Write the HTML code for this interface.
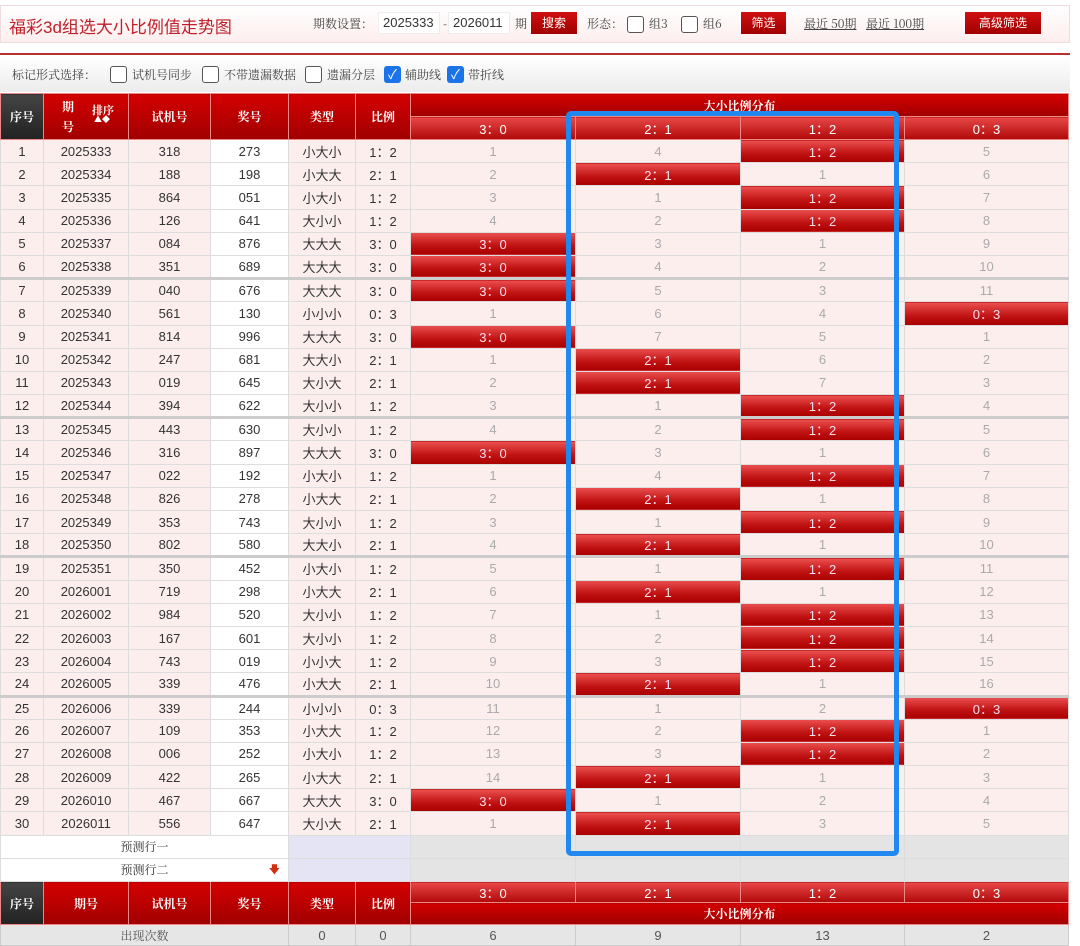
<!DOCTYPE html>
<html><head><meta charset="utf-8">
<style>
*{margin:0;padding:0;box-sizing:border-box}
body{width:1080px;height:946px;overflow:hidden;background:#fff;font-family:"Liberation Sans","Noto Sans CJK SC",sans-serif;font-size:13px;color:#333;position:relative}
.top{position:absolute;left:0;top:5px;width:1070px;height:38px;border:1px solid #f0dcdc;background:linear-gradient(#fff,#fdeeee)}
.title{position:absolute;left:8px;top:7px;font-family:"Liberation Sans","Noto Sans CJK SC",sans-serif;font-size:17px;color:#c0202a}
.ctl{position:absolute;top:9px;font-family:"Noto Serif CJK SC",serif;font-size:12px;color:#444}
.inp{position:absolute;top:6px;height:22px;background:#fff;border:1px solid #eee;font-size:13px;line-height:20px;padding-left:4px;color:#333}
.btn{position:absolute;top:6px;height:22px;background:linear-gradient(#d01010,#a00000);color:#fff;font-size:12px;line-height:22px;text-align:center}
.cb{position:absolute;width:17px;height:17px;border:1px solid #555;border-radius:3px;background:#fff}
.cbc{position:absolute;width:17px;height:17px;border-radius:3px;background:#1a73e8;color:#fff;font-size:13px;line-height:17px;text-align:center}
.redline{position:absolute;left:0;top:53px;width:1070px;height:2px;background:#b83030}
.mark{position:absolute;left:0;top:56px;width:1070px;height:36px;background:linear-gradient(#fff,#ececec)}
.mark span{position:absolute;top:10px;font-family:"Noto Serif CJK SC",serif;font-size:12px;color:#444}
table{position:absolute;left:0;top:93px;border-collapse:collapse;table-layout:fixed;width:1068px}
td{border:1px solid #ddd;text-align:center;height:23.2px;padding:0;font-size:13px;white-space:nowrap;overflow:hidden}
tbody td{background:#fdeeee;color:#333}
tbody td.w{background:#fff}
tbody td.n{color:#aaa}
tbody td.r{background:linear-gradient(#ec5050,#c01212 60%,#a80000);color:#fde;border-color:#ddd}
tr.s td{border-top:3px solid #ccc}
th,.h{background:linear-gradient(#d40000,#a00000);color:#fff;font-family:"Noto Serif CJK SC",serif;font-size:12px;font-weight:bold;border:1px solid #e88;text-align:center;padding:0}
.dk{background:linear-gradient(#444,#222)!important}
.sub{background:linear-gradient(#e84848,#b00808)!important;font-family:"Liberation Sans",sans-serif;font-weight:normal;font-size:13px;height:22px}
.g td{background:#e6e6e6;border-color:#ccc;height:21px}
.blue{position:absolute;left:566px;top:111px;width:333px;height:745px;border:5px solid #2188f0;border-radius:5px}
</style></head><body>
<div class="top">
<div class="title">福彩3d组选大小比例值走势图</div>
<span class="ctl" style="left:312px">期数设置：</span>
<div class="inp" style="left:377px;width:62px">2025333</div>
<span class="ctl" style="left:442px">-</span>
<div class="inp" style="left:447px;width:62px">2026011</div>
<span class="ctl" style="left:514px">期</span>
<div class="btn" style="left:530px;width:46px">搜索</div>
<span class="ctl" style="left:586px">形态：</span>
<div class="cb" style="left:626px;top:10px"></div><span class="ctl" style="left:648px">组3</span>
<div class="cb" style="left:680px;top:10px"></div><span class="ctl" style="left:702px">组6</span>
<div class="btn" style="left:740px;width:45px">筛选</div>
<span class="ctl" style="left:803px;text-decoration:underline">最近 50期</span>
<span class="ctl" style="left:865px;text-decoration:underline">最近 100期</span>
<div class="btn" style="left:964px;width:76px">高级筛选</div>
</div>
<div class="redline"></div>
<div class="mark">
<span style="left:12px">标记形式选择：</span>
<div class="cb" style="left:110px;top:10px"></div><span style="left:132px">试机号同步</span>
<div class="cb" style="left:202px;top:10px"></div><span style="left:224px">不带遗漏数据</span>
<div class="cb" style="left:305px;top:10px"></div><span style="left:327px">遗漏分层</span>
<div class="cbc" style="left:384px;top:10px">✓</div><span style="left:405px">辅助线</span>
<div class="cbc" style="left:447px;top:10px">✓</div><span style="left:468px">带折线</span>
</div>
<table>
<colgroup><col style="width:43px"><col style="width:85px"><col style="width:82px"><col style="width:78px"><col style="width:67px"><col style="width:55px"><col style="width:165px"><col style="width:165px"><col style="width:164px"><col style="width:164px"></colgroup>
<thead>
<tr style="height:23px"><th rowspan="2" class="dk">序号</th><th rowspan="2" style="position:relative"><span style="position:absolute;left:18px;top:4px">期</span><span style="position:absolute;left:18px;top:24px">号</span><span style="position:absolute;left:48px;top:8px;font-size:11px">排序</span><span style="position:absolute;left:50px;top:20px;font-size:8px">▲◆</span></th><th rowspan="2">试机号</th><th rowspan="2">奖号</th><th rowspan="2">类型</th><th rowspan="2">比例</th><th colspan="4">大小比例分布</th></tr>
<tr style="height:23px"><th class="sub">3：0</th><th class="sub">2：1</th><th class="sub">1：2</th><th class="sub">0：3</th></tr>
</thead>
<tbody>
<tr><td>1</td><td>2025333</td><td>318</td><td class="w">273</td><td>小大小</td><td>1：2</td><td class="n">1</td><td class="n">4</td><td class="r">1：2</td><td class="n">5</td></tr>
<tr><td>2</td><td>2025334</td><td>188</td><td class="w">198</td><td>小大大</td><td>2：1</td><td class="n">2</td><td class="r">2：1</td><td class="n">1</td><td class="n">6</td></tr>
<tr><td>3</td><td>2025335</td><td>864</td><td class="w">051</td><td>小大小</td><td>1：2</td><td class="n">3</td><td class="n">1</td><td class="r">1：2</td><td class="n">7</td></tr>
<tr><td>4</td><td>2025336</td><td>126</td><td class="w">641</td><td>大小小</td><td>1：2</td><td class="n">4</td><td class="n">2</td><td class="r">1：2</td><td class="n">8</td></tr>
<tr><td>5</td><td>2025337</td><td>084</td><td class="w">876</td><td>大大大</td><td>3：0</td><td class="r">3：0</td><td class="n">3</td><td class="n">1</td><td class="n">9</td></tr>
<tr><td>6</td><td>2025338</td><td>351</td><td class="w">689</td><td>大大大</td><td>3：0</td><td class="r">3：0</td><td class="n">4</td><td class="n">2</td><td class="n">10</td></tr>
<tr class="s"><td>7</td><td>2025339</td><td>040</td><td class="w">676</td><td>大大大</td><td>3：0</td><td class="r">3：0</td><td class="n">5</td><td class="n">3</td><td class="n">11</td></tr>
<tr><td>8</td><td>2025340</td><td>561</td><td class="w">130</td><td>小小小</td><td>0：3</td><td class="n">1</td><td class="n">6</td><td class="n">4</td><td class="r">0：3</td></tr>
<tr><td>9</td><td>2025341</td><td>814</td><td class="w">996</td><td>大大大</td><td>3：0</td><td class="r">3：0</td><td class="n">7</td><td class="n">5</td><td class="n">1</td></tr>
<tr><td>10</td><td>2025342</td><td>247</td><td class="w">681</td><td>大大小</td><td>2：1</td><td class="n">1</td><td class="r">2：1</td><td class="n">6</td><td class="n">2</td></tr>
<tr><td>11</td><td>2025343</td><td>019</td><td class="w">645</td><td>大小大</td><td>2：1</td><td class="n">2</td><td class="r">2：1</td><td class="n">7</td><td class="n">3</td></tr>
<tr><td>12</td><td>2025344</td><td>394</td><td class="w">622</td><td>大小小</td><td>1：2</td><td class="n">3</td><td class="n">1</td><td class="r">1：2</td><td class="n">4</td></tr>
<tr class="s"><td>13</td><td>2025345</td><td>443</td><td class="w">630</td><td>大小小</td><td>1：2</td><td class="n">4</td><td class="n">2</td><td class="r">1：2</td><td class="n">5</td></tr>
<tr><td>14</td><td>2025346</td><td>316</td><td class="w">897</td><td>大大大</td><td>3：0</td><td class="r">3：0</td><td class="n">3</td><td class="n">1</td><td class="n">6</td></tr>
<tr><td>15</td><td>2025347</td><td>022</td><td class="w">192</td><td>小大小</td><td>1：2</td><td class="n">1</td><td class="n">4</td><td class="r">1：2</td><td class="n">7</td></tr>
<tr><td>16</td><td>2025348</td><td>826</td><td class="w">278</td><td>小大大</td><td>2：1</td><td class="n">2</td><td class="r">2：1</td><td class="n">1</td><td class="n">8</td></tr>
<tr><td>17</td><td>2025349</td><td>353</td><td class="w">743</td><td>大小小</td><td>1：2</td><td class="n">3</td><td class="n">1</td><td class="r">1：2</td><td class="n">9</td></tr>
<tr><td>18</td><td>2025350</td><td>802</td><td class="w">580</td><td>大大小</td><td>2：1</td><td class="n">4</td><td class="r">2：1</td><td class="n">1</td><td class="n">10</td></tr>
<tr class="s"><td>19</td><td>2025351</td><td>350</td><td class="w">452</td><td>小大小</td><td>1：2</td><td class="n">5</td><td class="n">1</td><td class="r">1：2</td><td class="n">11</td></tr>
<tr><td>20</td><td>2026001</td><td>719</td><td class="w">298</td><td>小大大</td><td>2：1</td><td class="n">6</td><td class="r">2：1</td><td class="n">1</td><td class="n">12</td></tr>
<tr><td>21</td><td>2026002</td><td>984</td><td class="w">520</td><td>大小小</td><td>1：2</td><td class="n">7</td><td class="n">1</td><td class="r">1：2</td><td class="n">13</td></tr>
<tr><td>22</td><td>2026003</td><td>167</td><td class="w">601</td><td>大小小</td><td>1：2</td><td class="n">8</td><td class="n">2</td><td class="r">1：2</td><td class="n">14</td></tr>
<tr><td>23</td><td>2026004</td><td>743</td><td class="w">019</td><td>小小大</td><td>1：2</td><td class="n">9</td><td class="n">3</td><td class="r">1：2</td><td class="n">15</td></tr>
<tr><td>24</td><td>2026005</td><td>339</td><td class="w">476</td><td>小大大</td><td>2：1</td><td class="n">10</td><td class="r">2：1</td><td class="n">1</td><td class="n">16</td></tr>
<tr class="s"><td>25</td><td>2026006</td><td>339</td><td class="w">244</td><td>小小小</td><td>0：3</td><td class="n">11</td><td class="n">1</td><td class="n">2</td><td class="r">0：3</td></tr>
<tr><td>26</td><td>2026007</td><td>109</td><td class="w">353</td><td>小大大</td><td>1：2</td><td class="n">12</td><td class="n">2</td><td class="r">1：2</td><td class="n">1</td></tr>
<tr><td>27</td><td>2026008</td><td>006</td><td class="w">252</td><td>小大小</td><td>1：2</td><td class="n">13</td><td class="n">3</td><td class="r">1：2</td><td class="n">2</td></tr>
<tr><td>28</td><td>2026009</td><td>422</td><td class="w">265</td><td>小大大</td><td>2：1</td><td class="n">14</td><td class="r">2：1</td><td class="n">1</td><td class="n">3</td></tr>
<tr><td>29</td><td>2026010</td><td>467</td><td class="w">667</td><td>大大大</td><td>3：0</td><td class="r">3：0</td><td class="n">1</td><td class="n">2</td><td class="n">4</td></tr>
<tr><td>30</td><td>2026011</td><td>556</td><td class="w">647</td><td>大小大</td><td>2：1</td><td class="n">1</td><td class="r">2：1</td><td class="n">3</td><td class="n">5</td></tr>
<tr><td colspan="4" class="w" style="font-family:'Noto Serif CJK SC',serif;font-size:12px">预测行一</td><td colspan="2" style="background:#e4e4f4"></td><td style="background:#e4e4e4"></td><td style="background:#e4e4e4"></td><td style="background:#e4e4e4"></td><td style="background:#e4e4e4"></td></tr>
<tr><td colspan="4" class="w" style="font-family:'Noto Serif CJK SC',serif;font-size:12px;position:relative">预测行二<span style="position:absolute;right:8px;color:#d03010;font-size:11px">🡇</span></td><td colspan="2" style="background:#e4e4f4"></td><td style="background:#e4e4e4"></td><td style="background:#e4e4e4"></td><td style="background:#e4e4e4"></td><td style="background:#e4e4e4"></td></tr>
<tr style="height:21px"><th rowspan="2" class="dk">序号</th><th rowspan="2">期号</th><th rowspan="2">试机号</th><th rowspan="2">奖号</th><th rowspan="2">类型</th><th rowspan="2">比例</th><th class="sub" style="height:21px">3：0</th><th class="sub" style="height:21px">2：1</th><th class="sub" style="height:21px">1：2</th><th class="sub" style="height:21px">0：3</th></tr>
<tr style="height:22px"><th colspan="4">大小比例分布</th></tr>
<tr class="g"><td colspan="4" style="font-family:'Noto Serif CJK SC',serif;font-size:12px;color:#555">出现次数</td><td style="color:#555">0</td><td style="color:#555">0</td><td style="color:#555">6</td><td style="color:#555">9</td><td style="color:#555">13</td><td style="color:#555">2</td></tr>
</tbody>
</table>
<div class="blue"></div>
</body></html>
